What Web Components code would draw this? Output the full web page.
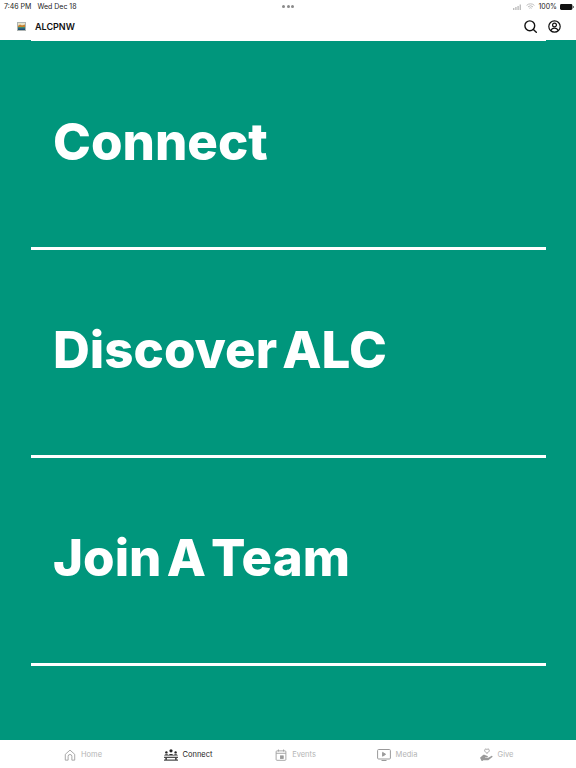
<!DOCTYPE html>
<html>
<head>
<meta charset="utf-8">
<title>ALCPNW</title>
<style>
    html, body { margin: 0; height: 100%; background: #00967c; }
    body { width: 576px; height: 768px; overflow: hidden; display: flex; flex-direction: column; font-family: "Inter", sans-serif; }
    app-main { flex: 1; }
</style>
</head>
<body>
<app-header title="ALCPNW"></app-header>
<app-main>
    <link-row>Connect</link-row>
    <link-row>Discover ALC</link-row>
    <link-row>Join A Team</link-row>
</app-main>
<tab-bar></tab-bar>

<script>
class AppHeader extends HTMLElement {
    connectedCallback() {
        this.attachShadow({ mode: 'open' });
        this.shadowRoot.innerHTML = `
            <style>
                :host { display: block; background: #fff; height: 40px; position: relative; color: #111; }
                .status {
                    height: 11px;
                    padding: 1px 2px 0 4px;
                    display: flex;
                    justify-content: space-between;
                    align-items: center;
                    font-size: 7px;
                    color: #222;
                }
                .status .left { display: flex; gap: 6px; }
                .status .right { display: flex; gap: 3px; align-items: center; }
                .dots { position: absolute; left: 282px; top: 5px; display: flex; gap: 1.5px; }
                .dots i { width: 3px; height: 3px; border-radius: 50%; background: #8a8a8a; }
                .bar {
                    height: 29px;
                    padding: 0 15px 0 17px;
                    display: flex;
                    align-items: center;
                    gap: 9px;
                }
                .title { font-size: 9px; font-weight: 600; flex: 1; }
                .actions { display: flex; gap: 11px; align-items: center; }
                svg { display: block; }
                .tick { position: absolute; left: 31px; right: 30px; bottom: -1px; height: 1px; background: #fff; }
            </style>
            <div class="status">
                <div class="left"><span>7:46 PM</span><span>Wed Dec 18</span></div>
                <div class="right">
                    <svg width="10" height="6" viewBox="0 0 10 6" fill="#bdbdbd">
                        <rect x="0" y="4" width="1.4" height="2"/><rect x="2.2" y="3" width="1.4" height="3"/>
                        <rect x="4.4" y="2" width="1.4" height="4"/><rect x="6.6" y="0.5" width="1.4" height="5.5"/>
                    </svg>
                    <svg width="9" height="7" viewBox="0 0 9 7" fill="none" stroke="#bdbdbd" stroke-width="1">
                        <path d="M.6 2.4a5.6 5.6 0 0 1 7.8 0M2 3.9a3.6 3.6 0 0 1 5 0M3.3 5.3a1.7 1.7 0 0 1 2.4 0"/>
                    </svg>
                    <span>100%</span>
                    <svg width="14" height="6" viewBox="0 0 14 6">
                        <rect x="0" y="0" width="12.4" height="6" rx="1.4" fill="#111"/>
                        <rect x="12.8" y="2" width="1" height="2" fill="#555"/>
                    </svg>
                </div>
            </div>
            <div class="dots"><i></i><i></i><i></i></div>
            <div class="bar">
                <svg width="9" height="9" viewBox="0 0 9 9">
                    <rect width="9" height="9" fill="#aeb4b2"/>
                    <rect x="1" y="1" width="7" height="2.4" fill="#e9e2c8"/>
                    <path d="M1 4l2-1.6 2 1 3-1V5H1z" fill="#c9822e"/>
                    <rect x="1" y="5" width="7" height="1.2" fill="#3f8f73"/>
                    <rect x="1" y="6.2" width="7" height="1.8" fill="#1c4f74"/>
                </svg>
                <span class="title">${this.getAttribute('title')}</span>
                <div class="actions">
                    <svg width="13" height="13" viewBox="0 0 13 13" fill="none" stroke="#111" stroke-width="1.4" stroke-linecap="round">
                        <circle cx="5.8" cy="5.8" r="4.9"/><path d="M9.4 9.4l2.9 2.9"/>
                    </svg>
                    <svg width="13" height="13" viewBox="0 0 13 13" fill="none" stroke="#111" stroke-width="1.2">
                        <circle cx="6.5" cy="6.5" r="5.7"/><circle cx="6.5" cy="5" r="1.9"/>
                        <path d="M2.9 10.6c.6-1.7 2-2.5 3.6-2.5s3 .8 3.6 2.5"/>
                    </svg>
                </div>
            </div>
            <div class="tick"></div>
        `;
    }
}

class AppMain extends HTMLElement {
    connectedCallback() {
        this.attachShadow({ mode: 'open' });
        this.shadowRoot.innerHTML = `
            <style>
                :host { display: block; background: #00967c; padding-top: 1.5px; }
            </style>
            <slot></slot>
        `;
    }
}

class LinkRow extends HTMLElement {
    connectedCallback() {
        this.attachShadow({ mode: 'open' });
        this.shadowRoot.innerHTML = `
            <style>
                :host {
                    display: flex;
                    align-items: center;
                    box-sizing: border-box;
                    height: 208px;
                    margin: 0 30px 0 31px;
                    padding: 0 22px 5px;
                    border-bottom: 3px solid #fff;
                    color: #fff;
                    font-size: 51px;
                    font-weight: 800;
                    word-spacing: -6px;
                }
            </style>
            <slot></slot>
        `;
    }
}

const TABS = [
    { label: 'Home', width: 100, size: 12, icon: '<path d="M1.5 6.2L7 1.3l5.5 4.9V13H9.2V8.6a2.2 2.2 0 0 0-4.4 0V13H1.5z"/>' },
    { label: 'Connect', active: true, width: 110, size: 14, icon: '<g fill="currentColor" stroke="none"><circle cx="7" cy="2.8" r="1.6"/><circle cx="2.4" cy="4.4" r="1.2"/><circle cx="11.6" cy="4.400" r="1.2"/><path d="M0 7.600C.6 6.400 1.600 6.200 2.600 6.200S4 6.600 4.400 7c.7-.7 1.600-1 2.600-1s1.900.3 2.600 1c.4-.4 1-.8 1.800-.8 1 0 2 .2 2.600 1.400z"/><rect y="8.800" width="14" height="1"/><rect x="1.400" y="9.800" width="1.400" height="2"/><rect x="11.200" y="9.800" width="1.400" height="2"/><rect y="11.600" width="14" height="1"/></g>' },
    { label: 'Events', width: 105, size: 12, icon: '<rect x="1.300" y="2.200" width="11.400" height="11" rx="1"/><path d="M1.300 5h11.400M4 .6v2.400M10 .6v2.400"/><rect x="6.400" y="8" width="3.200" height="3" fill="currentColor"/>' },
    { label: 'Media', width: 98, size: 14, icon: '<rect x=".6" y="1.500" width="12.800" height="9.500" rx="1"/><path d="M5.600 4.400l3 1.900-3 1.900z" fill="currentColor"/><path d="M4.500 12.500h5"/>' },
    { label: 'Give', width: 101, size: 13, icon: '<path d="M7.500 5.800C5.600 4.400 5 3.400 5 2.500 5 1 6.800.6 7.500 1.900 8.200.6 10 1 10 2.500c0 .9-.6 1.900-2.500 3.300z"/><path fill="currentColor" stroke="none" d="M0 10.500l3-2.700c.8-.5 1.500-.5 2.300-.2l2.700.9c.9.400.6 1.500-.4 1.400H5.500v.6h3.300l3.500-2c.8-.4 1.600.5 1 1.200l-4 3.200c-.4.300-.8.400-1.200.400H3.500l-1.500 1.200z"/>' }
];

class TabBar extends HTMLElement {
    connectedCallback() {
        this.attachShadow({ mode: 'open' });
        this.shadowRoot.innerHTML = `
            <style>
                :host {
                    display: flex;
                    background: #fff;
                    height: 28px;
                    box-sizing: border-box;
                    padding-left: 33px;
                }
                .tab {
                    display: flex;
                    align-items: center;
                    justify-content: center;
                    gap: 5px;
                    font-size: 7.5px;
                    color: #b4b4b4;
                    padding-top: 1px;
                }
                .tab svg { color: #9a9a9a; }
                .tab.active, .tab.active svg { color: #222; }
                svg { display: block; fill: none; stroke: currentColor; stroke-width: 1; }
            </style>
            ${TABS.map(t => `
                <div class="tab${t.active ? ' active' : ''}" style="width:${t.width}px">
                    <svg width="${t.size}" height="${t.size}" viewBox="0 0 14 14">${t.icon}</svg>
                    <span>${t.label}</span>
                </div>`).join('')}
        `;
    }
}

customElements.define('app-header', AppHeader);
customElements.define('app-main', AppMain);
customElements.define('link-row', LinkRow);
customElements.define('tab-bar', TabBar);
</script>
</body>
</html>
